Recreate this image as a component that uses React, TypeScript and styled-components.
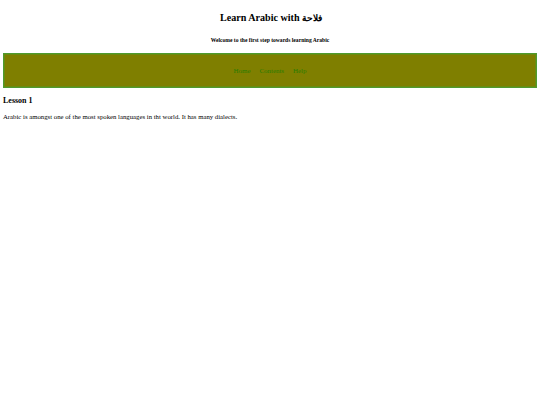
import React from "react";
import styled, { createGlobalStyle } from "styled-components";

const Global = createGlobalStyle`
  html, body { margin: 0; background: #fff; }
  body { padding: 3px; font-family: "Liberation Serif", "Times New Roman", serif; color: #000; font-size: 8px; }
`;
const Header = styled.header`
  text-align: center;
  padding-top: 8px;
`;
const Title = styled.h1`
  margin: 0;
  padding-left: 2px;
  font-size: 10.1px;
  line-height: 14px;
  font-weight: bold;
`;
const ArabicWord = styled.span`
  font-size: 9.2px;
`;
const Sub = styled.p`
  margin: 11px 0 0;
  font-size: 5.6px;
  line-height: 8px;
  font-weight: bold;
`;
const Nav = styled.nav`
  box-sizing: border-box;
  margin-top: 9px;
  height: 35px;
  background: #7f7f00;
  border: 1px solid #4f9a2f;
  box-shadow: inset 0 0 0 1px #6a8c10;
  display: flex;
  justify-content: center;
  align-items: center;
  gap: 9px;
`;
const NavLink = styled.a`
  color: #2a7d00;
  font-size: 7px;
  letter-spacing: -0.05px;
`;
const Lesson = styled.h2`
  margin: 8px 0 0;
  font-size: 8px;
  line-height: 10px;
  font-weight: bold;
`;
const Body = styled.p`
  margin: 7px 0 0;
  font-size: 6.75px;
  line-height: 8px;
`;
export default function App() {
  return (
    <>
      <Global />
      <Header>
        <Title>
          Learn Arabic with <ArabicWord>فلاحة</ArabicWord>
        </Title>
        <Sub>Welcome to the first step towards learning Arabic</Sub>
      </Header>
      <Nav>
        <NavLink>Home</NavLink>
        <NavLink>Contents</NavLink>
        <NavLink>Help</NavLink>
      </Nav>
      <Lesson>Lesson 1</Lesson>
      <Body>Arabic is amongst one of the most spoken languages in tht world. It has many dialects.</Body>
    </>
  );
}
